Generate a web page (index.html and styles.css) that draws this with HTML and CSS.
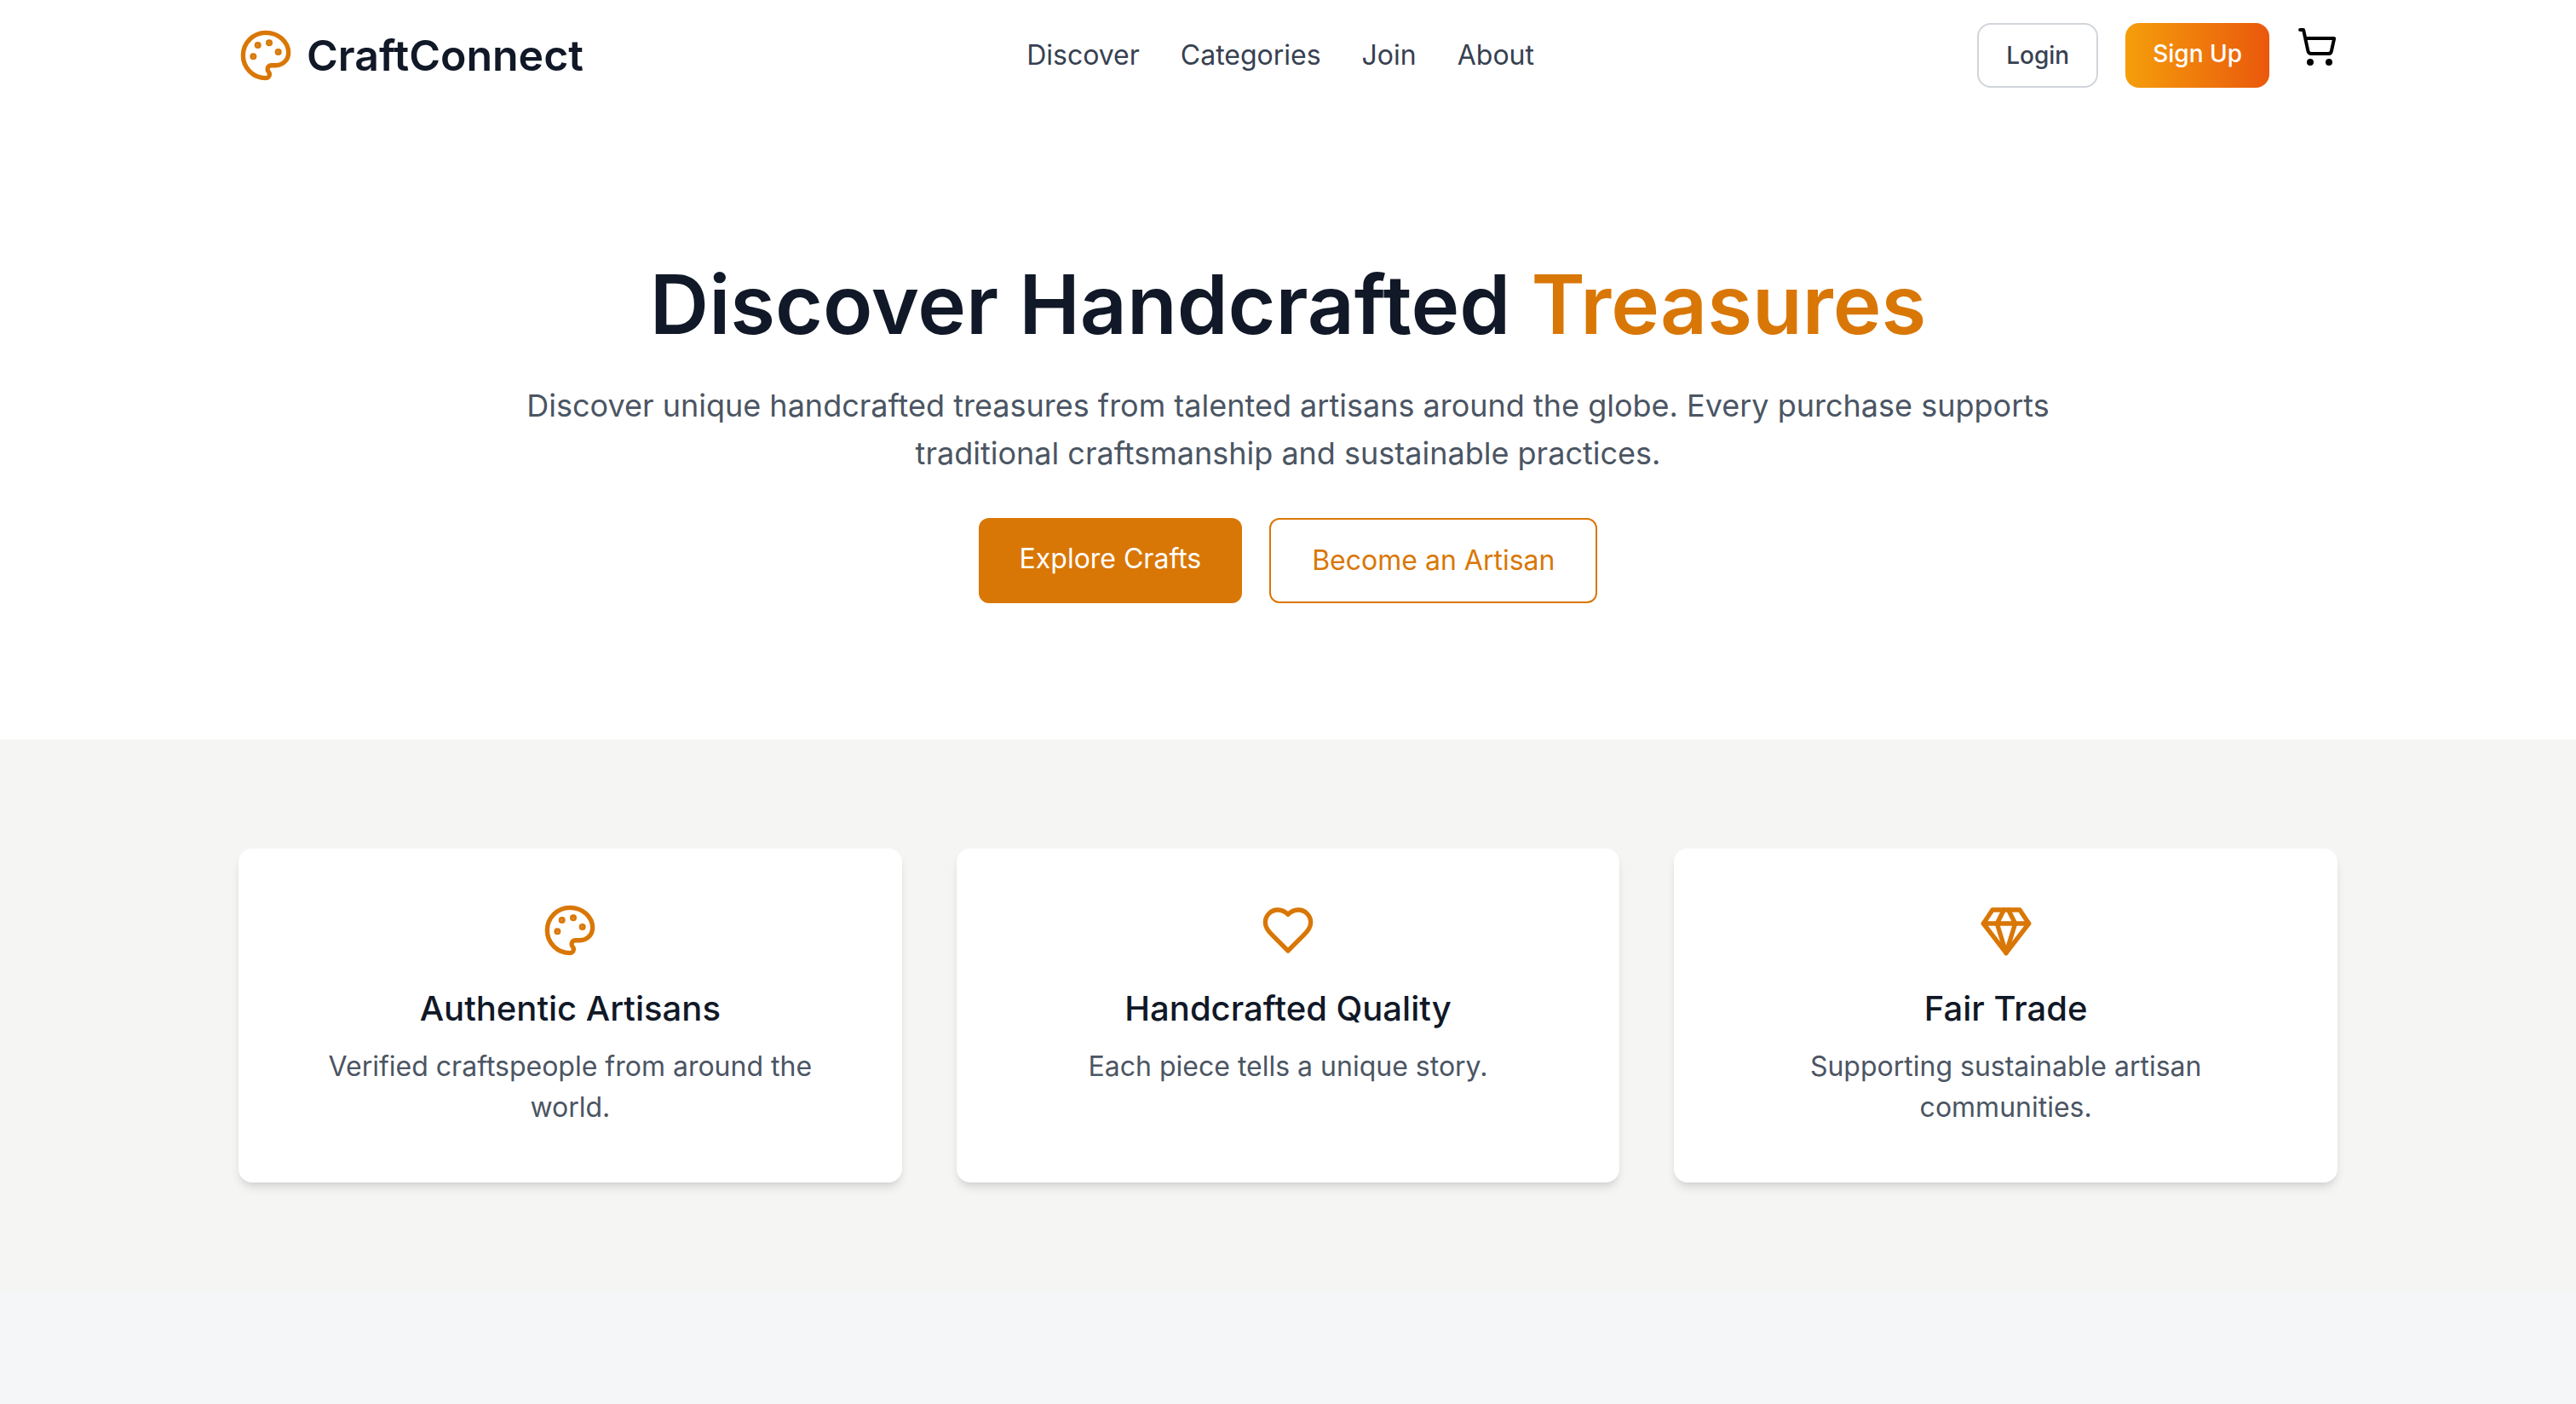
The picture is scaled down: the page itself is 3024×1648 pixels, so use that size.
FILE: index.html
```html
<!DOCTYPE html>
<html lang="en">
<head>
<meta charset="utf-8">
<meta name="viewport" content="width=device-width, initial-scale=1">
<title>CraftConnect</title>
<link rel="stylesheet" href="styles.css">
</head>
<body>
<header class="header">
  <div class="container header-bar">
    <a class="logo" href="#">
      <svg class="icon icon-large" viewBox="0 0 24 24" aria-hidden="true">
        <circle class="dot" cx="13.5" cy="6.5" r=".5"/>
        <circle class="dot" cx="17.5" cy="10.5" r=".5"/>
        <circle class="dot" cx="8.5" cy="7.5" r=".5"/>
        <circle class="dot" cx="6.5" cy="12.5" r=".5"/>
        <path d="M12 2C6.5 2 2 6.5 2 12s4.500 10 10 10c.926 0 1.648-.746 1.648-1.688 0-.437-.18-.835-.437-1.125-.29-.289-.438-.652-.438-1.125a1.640 1.640 0 0 1 1.668-1.668h1.996c3.051 0 5.555-2.503 5.555-5.554C21.965 6.012 17.461 2 12 2z"/>
      </svg>
      <span>CraftConnect</span>
    </a>
    <nav class="nav" aria-label="Main">
      <a href="#">Discover</a>
      <a href="#">Categories</a>
      <a href="#">Join</a>
      <a href="#">About</a>
    </nav>
    <div class="actions">
      <button class="button button-login" type="button">Login</button>
      <button class="button button-signup" type="button">Sign Up</button>
      <button class="cart" type="button" aria-label="Shopping cart">
        <svg class="icon icon-cart" viewBox="0 0 24 24" aria-hidden="true">
          <circle cx="8" cy="21" r="1"/>
          <circle cx="19" cy="21" r="1"/>
          <path d="M2.050 2.050h2l2.660 12.420a2 2 0 0 0 2 1.580h9.780a2 2 0 0 0 1.950-1.570l1.650-7.430H5.120"/>
        </svg>
      </button>
    </div>
  </div>
</header>

<main>
  <section class="hero">
    <div class="container">
      <h1 class="hero-title">Discover Handcrafted <span class="accent">Treasures</span></h1>
      <p class="hero-text">Discover unique handcrafted treasures from talented artisans around the globe. Every purchase supports traditional craftsmanship and sustainable practices.</p>
      <div class="hero-actions">
        <a class="cta cta-solid" href="#">Explore Crafts</a>
        <a class="cta cta-outline" href="#">Become an Artisan</a>
      </div>
    </div>
  </section>

  <section class="features">
    <div class="container feature-grid">
      <article class="card">
        <svg class="icon icon-large" viewBox="0 0 24 24" aria-hidden="true">
          <circle class="dot" cx="13.5" cy="6.5" r=".5"/>
          <circle class="dot" cx="17.5" cy="10.5" r=".5"/>
          <circle class="dot" cx="8.5" cy="7.5" r=".5"/>
          <circle class="dot" cx="6.5" cy="12.5" r=".5"/>
          <path d="M12 2C6.5 2 2 6.5 2 12s4.500 10 10 10c.926 0 1.648-.746 1.648-1.688 0-.437-.18-.835-.437-1.125-.29-.289-.438-.652-.438-1.125a1.640 1.640 0 0 1 1.668-1.668h1.996c3.051 0 5.555-2.503 5.555-5.554C21.965 6.012 17.461 2 12 2z"/>
        </svg>
        <h2 class="card-title">Authentic Artisans</h2>
        <p class="card-text">Verified craftspeople from around the world.</p>
      </article>
      <article class="card">
        <svg class="icon icon-large" viewBox="0 0 24 24" aria-hidden="true">
          <path d="M19 14c1.490-1.460 3-3.210 3-5.500A5.500 5.500 0 0 0 16.500 3c-1.760 0-3 .5-4.500 2-1.500-1.500-2.740-2-4.500-2A5.500 5.500 0 0 0 2 8.500c0 2.300 1.500 4.050 3 5.500l7 7Z"/>
        </svg>
        <h2 class="card-title">Handcrafted Quality</h2>
        <p class="card-text">Each piece tells a unique story.</p>
      </article>
      <article class="card">
        <svg class="icon icon-large" viewBox="0 0 24 24" aria-hidden="true">
          <path d="M6 3h12l4 6-10 13L2 9Z"/>
          <path d="M11 3 8 9l4 13 4-13-3-6"/>
          <path d="M2 9h20"/>
        </svg>
        <h2 class="card-title">Fair Trade</h2>
        <p class="card-text">Supporting sustainable artisan communities.</p>
      </article>
    </div>
  </section>
</main>
</body>
</html>
```
FILE: styles.css
```css
*, *::before, *::after { box-sizing: border-box; }

body {
  margin: 0;
  background: #f4f6f8;
  color: #111827;
  font-family: Inter, "Open Sans", sans-serif;
  font-size: 32px;
  font-weight: 400;
  line-height: 48px;
}

h1, h2, p { margin: 0; }
a { color: inherit; text-decoration: none; }
button { font: inherit; cursor: pointer; }

.container {
  width: 100%;
  max-width: 2560px;
  margin: 0 auto;
  padding: 0 48px;
}

.icon {
  display: block;
  fill: none;
  stroke: currentColor;
  stroke-width: 2;
  stroke-linecap: round;
  stroke-linejoin: round;
}
.icon .dot { fill: currentColor; }
.icon-large { width: 64px; height: 64px; color: #d97706; }
.icon-cart { width: 48px; height: 48px; }

/* Header */
.header { background: #fff; }
.header-bar {
  display: flex;
  align-items: center;
  justify-content: space-between;
  min-height: 130px;
}
.logo {
  display: flex;
  align-items: center;
  gap: 16px;
  font-size: 50px;
  font-weight: 600;
  line-height: 64px;
}
.nav { display: flex; gap: 48px; color: #374151; }
.actions { display: flex; align-items: center; gap: 32px; }

.button {
  height: 76px;
  padding: 0 32px;
  border: 0;
  border-radius: 16px;
  font-size: 28px;
  font-weight: 500;
  line-height: 40px;
}
.button-login {
  border: 2px solid #d1d5db;
  background: #fff;
  color: #374151;
}
.button-signup {
  padding-bottom: 4px;
  background: linear-gradient(to right, #f59e0b, #ea580c);
  color: #fff;
}
.cart {
  padding: 0 0 20px;
  border: 0;
  background: none;
  color: #000;
}

/* Hero */
.hero {
  padding: 160px 0;
  background: #fff;
  text-align: center;
}
.hero-title {
  margin-bottom: 24px;
  font-size: 96px;
  font-weight: 600;
  line-height: 134px;
}
.accent { color: #d97706; }
.hero-text {
  max-width: 1860px;
  margin: 0 auto 48px;
  color: #4b5563;
  font-size: 36px;
  line-height: 56px;
}
.hero-actions { display: flex; justify-content: center; gap: 32px; }
.cta { padding: 24px 48px; border-radius: 12px; }
.cta-solid { background: #d97706; color: #fff; }
.cta-outline { border: 2px solid #d97706; color: #d97706; }

/* Features */
.features { padding: 128px 0; background: #f5f5f4; }
.feature-grid {
  display: grid;
  grid-template-columns: repeat(3, 1fr);
  gap: 64px;
}
.card {
  display: flex;
  flex-direction: column;
  align-items: center;
  padding: 64px;
  border-radius: 16px;
  background: #fff;
  box-shadow: 0 8px 12px -2px rgba(0, 0, 0, .1), 0 4px 8px -4px rgba(0, 0, 0, .1);
  text-align: center;
}
.card-title {
  margin: 32px 0 16px;
  font-size: 40px;
  font-weight: 500;
  line-height: 56px;
}
.card-text { color: #4b5563; }
```
